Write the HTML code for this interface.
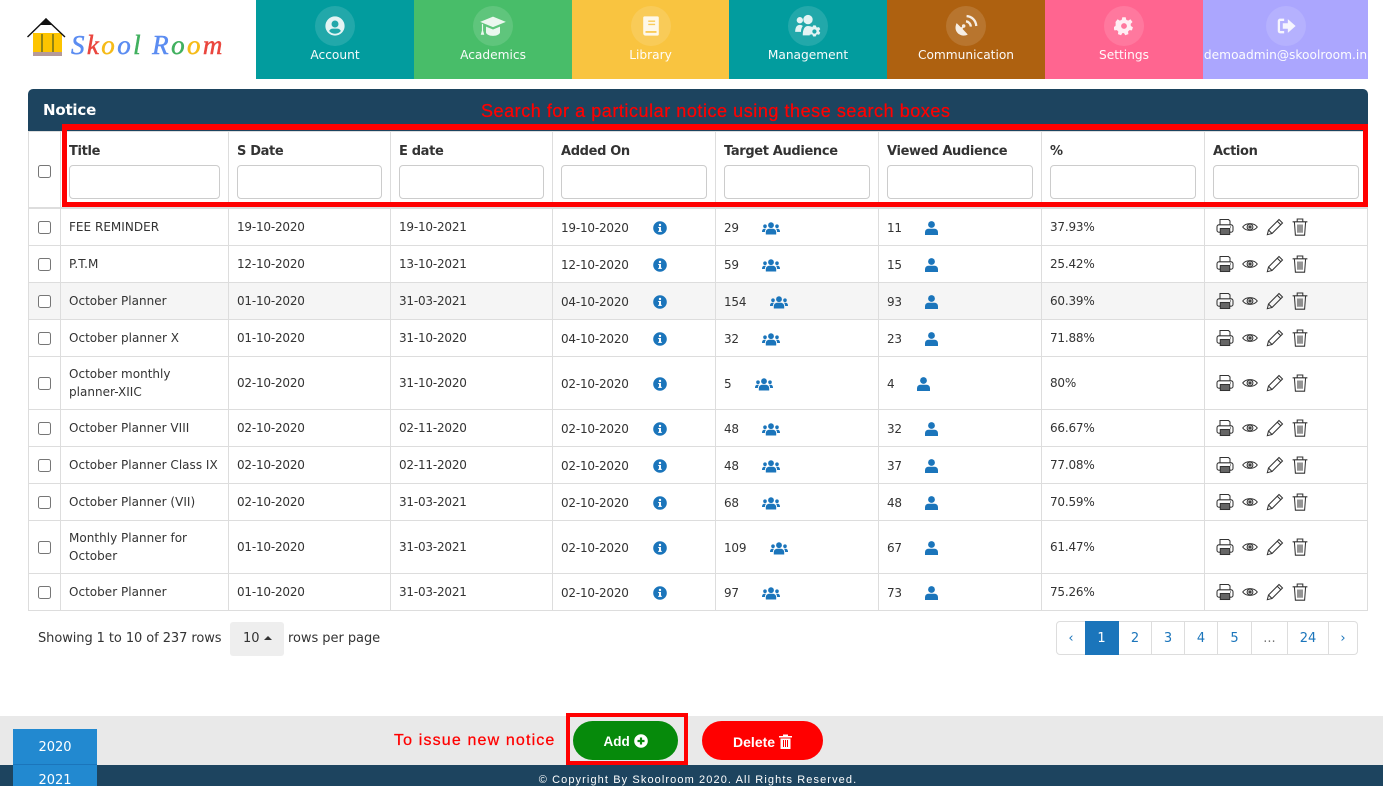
<!DOCTYPE html>
<html><head><meta charset="utf-8"><title>Notice</title>
<style>
html,body{margin:0;padding:0;background:#fff}
body{width:1383px;height:786px;overflow:hidden;position:relative;font-family:"DejaVu Sans","Liberation Sans",sans-serif;font-size:12px;color:#333}
.tile{position:absolute;top:0;height:79px;color:#fff;text-align:center}
.tile .c{position:absolute;left:50%;margin-left:-20px;top:6px;width:40px;height:40px;border-radius:50%;background:rgba(255,255,255,.13)}
.tile svg{position:absolute;left:9px;top:9px;width:22px;height:22px;fill:#fff;opacity:.88}
.tile .l{position:absolute;left:0;right:0;top:48px;font-size:12.2px;line-height:15px;white-space:nowrap;opacity:.97}
.abs{position:absolute}
table{position:absolute;left:28px;top:131px;width:1339px;border-collapse:collapse;table-layout:fixed}
td,th{border:1px solid #ddd;padding:0 8px;font-weight:normal;text-align:left;vertical-align:middle;line-height:18px;overflow:hidden;white-space:nowrap}
td.w{white-space:normal}
td:nth-child(2){letter-spacing:.02px}
td:nth-child(3),td:nth-child(4),.n,td:nth-child(8){letter-spacing:-.2px}
.n,.ic,.nf{position:relative;top:1px}
th{height:75px;border-bottom:2px solid #ddd;padding:0 8px;vertical-align:top}
th b{display:block;margin-top:11px;font-size:13px;line-height:18px;color:#333;letter-spacing:-.35px}
th i{display:block;box-sizing:border-box;height:34px;margin-top:4px;width:146px;background:#fff;border:1px solid #ccc;border-radius:4px}
tr.a td{height:36px}tr.b td{height:52px}tr.g td{background:#f5f5f5}
.cb{display:block;box-sizing:border-box;width:13px;height:13px;border:1px solid #767676;border-radius:2.5px;background:#fff;margin:0 auto}
.n{display:inline-block;vertical-align:middle}
td svg{vertical-align:middle}
.ic{fill:#1b75bb}
.act{display:flex;align-items:center;height:18px;margin-left:3px}
.act svg{fill:none;stroke:#333;stroke-width:1.05;display:block}
.pg{position:absolute;top:621px;height:32px;box-sizing:content-box;border:1px solid #ddd;border-left:0;text-align:center;line-height:34px;font-size:13px;color:#1b75bb}
.red{font-family:"Liberation Sans",sans-serif;color:#f00;white-space:nowrap;-webkit-text-stroke:.25px #f00}
.btn{position:absolute;top:721px;height:39px;border-radius:20px;color:#fff;font-weight:bold;font-size:13.5px;text-align:center;line-height:41px;font-family:"Liberation Sans",sans-serif}
</style></head><body>
<svg width="0" height="0" style="position:absolute"><defs>
<symbol id="pr" viewBox="0 0 18 18"><path d="M4 7V1.500h8.500L14 3v4"/><rect x="1" y="6.800" width="16" height="7.400" rx="2"/><rect x="4.300" y="10.500" width="9.400" height="6" fill="#666"/><path d="M14 9h1"/></symbol>
<symbol id="ey" viewBox="0 0 16 10"><path d="M.7 5C4 .5 12 .5 15.300 5 12 9.500 4 9.500.7 5Z"/><circle cx="8" cy="5" r="2.900"/><circle cx="8" cy="5" r="1.100" fill="#666"/></symbol>
<symbol id="pe" viewBox="0 0 18 18"><path d="M1.300 16.700 2.500 12 13 1.500 16.500 5 6 15.500ZM11.300 3.200l3.500 3.500M2.500 12 6 15.500"/></symbol>
<symbol id="tr" viewBox="0 0 16 18"><path d="M.6 3.800h14.800M5.200 3.600V1h5.600v2.600M2.400 4l1 13.200h9.200l1-13.200M6 6.500v8.300M8 6.500v8.300M10 6.500v8.300"/></symbol>
<symbol id="in" viewBox="0 0 14 14"><circle cx="7" cy="7" r="6.800" fill="#1b75bb"/><rect x="6" y="6" width="2" height="4.600" fill="#fff"/><rect x="5.200" y="9.800" width="3.600" height="1.100" fill="#fff"/><rect x="5.200" y="6" width="2" height="1" fill="#fff"/><circle cx="7" cy="4" r="1.200" fill="#fff"/></symbol>
<symbol id="us" viewBox="0 0 18 13"><circle cx="9" cy="3.200" r="2.900"/><circle cx="3" cy="4.200" r="1.800"/><circle cx="15" cy="4.200" r="1.800"/><path d="M3.800 12.500v-2.300C3.800 8 5.500 6.800 7.500 6.800h3c2 0 3.700 1.200 3.700 3.400v2.300ZM0 9.800C0 7.800 1 6.800 2.400 6.800h1.700C3.200 7.700 2.900 8.800 2.900 10H0ZM18 9.800c0-2-1-3-2.400-3h-1.700c.9.900 1.200 2 1.200 3.200H18Z"/></symbol>
<symbol id="u1" viewBox="0 0 13 14"><circle cx="6.500" cy="3.500" r="3.400"/><path d="M0 14v-2.500C0 9 1.800 7.800 3.500 7.800h6C11.200 7.800 13 9 13 11.500V14Z"/></symbol>
</defs></svg>

<!-- logo -->
<svg class="abs" style="left:26px;top:16px" width="44" height="42" viewBox="0 0 44 42"><rect x="7" y="17" width="29" height="19" fill="#fdc400"/><rect x="7" y="36" width="29" height="4" fill="#b59a9a"/><path d="M16 18v18M27 18v18" stroke="#4a5a20" stroke-width="1.200"/><path d="M1.500 21 20 3l19 18" fill="none" stroke="#111" stroke-width="1.400"/><path d="M14 9 20 2l6 7Z" fill="#111"/></svg>
<div class="abs" style="left:71px;top:30px;font:italic 27px/30px 'Liberation Serif',serif;letter-spacing:2.400px;white-space:nowrap;opacity:.9;-webkit-text-stroke:.5px currentColor"><span style="color:#4a80f0">S</span><span style="color:#e8332a">k</span><span style="color:#f5b400">o</span><span style="color:#4a80f0">o</span><span style="color:#2da84e">l</span> <span style="color:#4a80f0">R</span><span style="color:#2da84e">o</span><span style="color:#f5b400">o</span><span style="color:#e8332a">m</span></div>

<!-- nav -->
<div class="tile" style="left:256px;width:158px;background:#029c9e"><div class="c"><svg viewBox="0 0 24 24"><path fill-rule="evenodd" d="M12 1.500a10.500 10.500 0 1 0 0 21 10.500 10.500 0 0 0 0-21Zm0 4.500a3.800 3.800 0 1 1 0 7.600 3.800 3.800 0 0 1 0-7.600Zm0 14.500c-2.600 0-4.900-1.200-6.400-3 .7-1.600 2.200-2.600 3.900-2.600h5c1.700 0 3.200 1 3.900 2.600-1.500 1.800-3.800 3-6.400 3Z"/></svg></div><div class="l">Account</div></div>
<div class="tile" style="left:414px;width:158px;background:#48bd69"><div class="c"><svg viewBox="0 0 24 24" style="left:6px;top:6px;width:28px;height:28px"><path d="M12 4 1 8.500l11 4.500 11-4.500ZM6 12.500v5c0 1.500 2.700 3 6 3s6-1.500 6-3v-5l-6 2.500ZM2.500 10v6l-1 3.500h3l-1-3.500v-5.500Z"/></svg></div><div class="l">Academics</div></div>
<div class="tile" style="left:572px;width:157px;background:#f9c440"><div class="c"><svg viewBox="0 0 24 24"><path fill-rule="evenodd" d="M5 1.500h14a1.500 1.500 0 0 1 1.500 1.500v18a1.500 1.500 0 0 1-1.500 1.500H6a2.500 2.500 0 0 1-2.500-2.500V3A1.500 1.500 0 0 1 5 1.500ZM9 6v1.500h7.500V6Zm0 3.500V11h7.500V9.500ZM6 17.500v2h12v-2Z"/></svg></div><div class="l">Library</div></div>
<div class="tile" style="left:729px;width:158px;background:#029c9e"><div class="c"><svg viewBox="0 0 24 24" style="left:6px;top:6px;width:28px;height:28px"><circle cx="5" cy="7" r="2.700"/><circle cx="12" cy="6.500" r="4"/><path d="M1 17c0-4 1.500-6 4-6 1 0 2 .3 2.500 1-1 1.500-1.500 3-1.500 5ZM7.500 20c0-5 1.500-8 4.500-8 1.500 0 3 .4 4 1.200-1.500 1.500-2.500 3-2.500 6.800Z"/><path fill-rule="evenodd" d="M18.500 11.500l1 1.800 2-.3 1 1.700-1.300 1.500 1.300 1.600-1 1.700-2-.4-1 1.900h-2l-1-1.900-2 .4-1-1.700 1.300-1.600-1.300-1.500 1-1.700 2 .3 1-1.800Zm-1 3.400a1.800 1.800 0 1 0 0 3.600 1.800 1.800 0 0 0 0-3.600Z"/></svg></div><div class="l">Management</div></div>
<div class="tile" style="left:887px;width:158px;background:#ae6110"><div class="c"><svg viewBox="0 0 24 24" style="left:6px;top:6px;width:28px;height:28px"><path d="M4 9.500c-2 4-.8 7.500 2 9.500 2.500 1.800 5.500 1.500 7.500.3L9 14.500l1-1.200-1-1-1.200 1Z"/><path fill="none" stroke="#fff" stroke-width="2" d="M12 8c2.300.3 4 2.200 4.200 4.500M12.500 3.500c4.500.3 8 3.800 8.300 8.500"/><circle cx="10" cy="12" r="1.500"/></svg></div><div class="l">Communication</div></div>
<div class="tile" style="left:1045px;width:158px;background:#ff6590"><div class="c"><svg viewBox="0 0 24 24" style="left:10px;top:10px;width:20px;height:20px"><path fill-rule="evenodd" d="M10 1.500h4l.7 3 2.300 1 2.700-1.600 2.500 3.300-2.200 2.200.2 2.600 2.500 1.500-1.200 3.800-3-.4-1.700 1.900.5 3-3.800 1.300-1.500-2.600h-2l-1.500 2.600-3.800-1.300.5-3-1.700-1.900-3 .4-1.200-3.800 2.500-1.500.2-2.600L1.800 7.200l2.500-3.300L7 5.500l2.300-1ZM12 8.500a3.500 3.500 0 1 0 0 7 3.500 3.500 0 0 0 0-7Z"/></svg></div><div class="l">Settings</div></div>
<div class="tile" style="left:1203px;width:165px;background:#aba6fe"><div class="c"><svg viewBox="0 0 24 24"><path d="M3 6.500A2.500 2.500 0 0 1 5.500 4H10v2.500H6a.5.500 0 0 0-.5.500v10a.5.500 0 0 0 .5.500h4V20H5.500A2.500 2.500 0 0 1 3 17.500ZM14 4.500 22.500 12 14 19.500V15H8.500V9H14Z"/></svg></div><div class="l" style="font-size:12.2px;letter-spacing:.02px">demoadmin@skoolroom.in</div></div>

<!-- panel header -->
<div class="abs" style="left:28px;top:89px;width:1340px;height:42px;background:#1d445f;border-radius:5px 5px 0 0"></div>
<div class="abs" style="left:43px;top:100px;color:#fff;font-weight:bold;font-size:15px;line-height:20px;letter-spacing:-.2px">Notice</div>

<table>
<colgroup><col style="width:32px"><col style="width:168px"><col style="width:162px"><col style="width:162px"><col style="width:163px"><col style="width:163px"><col style="width:163px"><col style="width:163px"><col style="width:163px"></colgroup>
<tr><th style="vertical-align:middle;padding:0"><span class="cb" style="margin-top:3px"></span></th><th><b>Title</b><i style="width:151px"></i></th><th><b>S Date</b><i style="width:145px"></i></th><th><b>E date</b><i style="width:145px"></i></th><th><b>Added On</b><i></i></th><th><b>Target Audience</b><i></i></th><th><b>Viewed Audience</b><i></i></th><th><b>%</b><i></i></th><th><b>Action</b><i></i></th></tr>
<tr class="a"><td style="padding:0"><span class="cb"></span></td><td>FEE REMINDER</td><td>19-10-2020</td><td>19-10-2021</td><td><span class="n" style="width:92px">19-10-2020</span><svg class="nf" width="14" height="14"><use href="#in"/></svg></td><td><span class="n" style="width:38px">29</span><svg class="ic" width="18" height="13"><use href="#us"/></svg></td><td><span class="n" style="width:38px">11</span><svg class="ic" width="13" height="14"><use href="#u1"/></svg></td><td>37.93%</td><td><div class="act"><svg width="18" height="18"><use href="#pr"/></svg><svg width="16" height="10" style="margin-left:8px"><use href="#ey"/></svg><svg width="18" height="18" style="margin-left:8px"><use href="#pe"/></svg><svg width="16" height="18" style="margin-left:8px"><use href="#tr"/></svg></div></td></tr>
<tr class="a"><td style="padding:0"><span class="cb"></span></td><td>P.T.M</td><td>12-10-2020</td><td>13-10-2021</td><td><span class="n" style="width:92px">12-10-2020</span><svg class="nf" width="14" height="14"><use href="#in"/></svg></td><td><span class="n" style="width:38px">59</span><svg class="ic" width="18" height="13"><use href="#us"/></svg></td><td><span class="n" style="width:38px">15</span><svg class="ic" width="13" height="14"><use href="#u1"/></svg></td><td>25.42%</td><td><div class="act"><svg width="18" height="18"><use href="#pr"/></svg><svg width="16" height="10" style="margin-left:8px"><use href="#ey"/></svg><svg width="18" height="18" style="margin-left:8px"><use href="#pe"/></svg><svg width="16" height="18" style="margin-left:8px"><use href="#tr"/></svg></div></td></tr>
<tr class="a g"><td style="padding:0"><span class="cb"></span></td><td>October Planner</td><td>01-10-2020</td><td>31-03-2021</td><td><span class="n" style="width:92px">04-10-2020</span><svg class="nf" width="14" height="14"><use href="#in"/></svg></td><td><span class="n" style="width:46px">154</span><svg class="ic" width="18" height="13"><use href="#us"/></svg></td><td><span class="n" style="width:38px">93</span><svg class="ic" width="13" height="14"><use href="#u1"/></svg></td><td>60.39%</td><td><div class="act"><svg width="18" height="18"><use href="#pr"/></svg><svg width="16" height="10" style="margin-left:8px"><use href="#ey"/></svg><svg width="18" height="18" style="margin-left:8px"><use href="#pe"/></svg><svg width="16" height="18" style="margin-left:8px"><use href="#tr"/></svg></div></td></tr>
<tr class="a"><td style="padding:0"><span class="cb"></span></td><td>October planner X</td><td>01-10-2020</td><td>31-10-2020</td><td><span class="n" style="width:92px">04-10-2020</span><svg class="nf" width="14" height="14"><use href="#in"/></svg></td><td><span class="n" style="width:38px">32</span><svg class="ic" width="18" height="13"><use href="#us"/></svg></td><td><span class="n" style="width:38px">23</span><svg class="ic" width="13" height="14"><use href="#u1"/></svg></td><td>71.88%</td><td><div class="act"><svg width="18" height="18"><use href="#pr"/></svg><svg width="16" height="10" style="margin-left:8px"><use href="#ey"/></svg><svg width="18" height="18" style="margin-left:8px"><use href="#pe"/></svg><svg width="16" height="18" style="margin-left:8px"><use href="#tr"/></svg></div></td></tr>
<tr class="b"><td style="padding:0"><span class="cb"></span></td><td class="w">October monthly planner-XIIC</td><td>02-10-2020</td><td>31-10-2020</td><td><span class="n" style="width:92px">02-10-2020</span><svg class="nf" width="14" height="14"><use href="#in"/></svg></td><td><span class="n" style="width:31px">5</span><svg class="ic" width="18" height="13"><use href="#us"/></svg></td><td><span class="n" style="width:30px">4</span><svg class="ic" width="13" height="14"><use href="#u1"/></svg></td><td>80%</td><td><div class="act"><svg width="18" height="18"><use href="#pr"/></svg><svg width="16" height="10" style="margin-left:8px"><use href="#ey"/></svg><svg width="18" height="18" style="margin-left:8px"><use href="#pe"/></svg><svg width="16" height="18" style="margin-left:8px"><use href="#tr"/></svg></div></td></tr>
<tr class="a"><td style="padding:0"><span class="cb"></span></td><td>October Planner VIII</td><td>02-10-2020</td><td>02-11-2020</td><td><span class="n" style="width:92px">02-10-2020</span><svg class="nf" width="14" height="14"><use href="#in"/></svg></td><td><span class="n" style="width:38px">48</span><svg class="ic" width="18" height="13"><use href="#us"/></svg></td><td><span class="n" style="width:38px">32</span><svg class="ic" width="13" height="14"><use href="#u1"/></svg></td><td>66.67%</td><td><div class="act"><svg width="18" height="18"><use href="#pr"/></svg><svg width="16" height="10" style="margin-left:8px"><use href="#ey"/></svg><svg width="18" height="18" style="margin-left:8px"><use href="#pe"/></svg><svg width="16" height="18" style="margin-left:8px"><use href="#tr"/></svg></div></td></tr>
<tr class="a"><td style="padding:0"><span class="cb"></span></td><td>October Planner Class IX</td><td>02-10-2020</td><td>02-11-2020</td><td><span class="n" style="width:92px">02-10-2020</span><svg class="nf" width="14" height="14"><use href="#in"/></svg></td><td><span class="n" style="width:38px">48</span><svg class="ic" width="18" height="13"><use href="#us"/></svg></td><td><span class="n" style="width:38px">37</span><svg class="ic" width="13" height="14"><use href="#u1"/></svg></td><td>77.08%</td><td><div class="act"><svg width="18" height="18"><use href="#pr"/></svg><svg width="16" height="10" style="margin-left:8px"><use href="#ey"/></svg><svg width="18" height="18" style="margin-left:8px"><use href="#pe"/></svg><svg width="16" height="18" style="margin-left:8px"><use href="#tr"/></svg></div></td></tr>
<tr class="a"><td style="padding:0"><span class="cb"></span></td><td>October Planner (VII)</td><td>02-10-2020</td><td>31-03-2021</td><td><span class="n" style="width:92px">02-10-2020</span><svg class="nf" width="14" height="14"><use href="#in"/></svg></td><td><span class="n" style="width:38px">68</span><svg class="ic" width="18" height="13"><use href="#us"/></svg></td><td><span class="n" style="width:38px">48</span><svg class="ic" width="13" height="14"><use href="#u1"/></svg></td><td>70.59%</td><td><div class="act"><svg width="18" height="18"><use href="#pr"/></svg><svg width="16" height="10" style="margin-left:8px"><use href="#ey"/></svg><svg width="18" height="18" style="margin-left:8px"><use href="#pe"/></svg><svg width="16" height="18" style="margin-left:8px"><use href="#tr"/></svg></div></td></tr>
<tr class="b"><td style="padding:0"><span class="cb"></span></td><td class="w">Monthly Planner for October</td><td>01-10-2020</td><td>31-03-2021</td><td><span class="n" style="width:92px">02-10-2020</span><svg class="nf" width="14" height="14"><use href="#in"/></svg></td><td><span class="n" style="width:46px">109</span><svg class="ic" width="18" height="13"><use href="#us"/></svg></td><td><span class="n" style="width:38px">67</span><svg class="ic" width="13" height="14"><use href="#u1"/></svg></td><td>61.47%</td><td><div class="act"><svg width="18" height="18"><use href="#pr"/></svg><svg width="16" height="10" style="margin-left:8px"><use href="#ey"/></svg><svg width="18" height="18" style="margin-left:8px"><use href="#pe"/></svg><svg width="16" height="18" style="margin-left:8px"><use href="#tr"/></svg></div></td></tr>
<tr class="a"><td style="padding:0"><span class="cb"></span></td><td>October Planner</td><td>01-10-2020</td><td>31-03-2021</td><td><span class="n" style="width:92px">02-10-2020</span><svg class="nf" width="14" height="14"><use href="#in"/></svg></td><td><span class="n" style="width:38px">97</span><svg class="ic" width="18" height="13"><use href="#us"/></svg></td><td><span class="n" style="width:38px">73</span><svg class="ic" width="13" height="14"><use href="#u1"/></svg></td><td>75.26%</td><td><div class="act"><svg width="18" height="18"><use href="#pr"/></svg><svg width="16" height="10" style="margin-left:8px"><use href="#ey"/></svg><svg width="18" height="18" style="margin-left:8px"><use href="#pe"/></svg><svg width="16" height="18" style="margin-left:8px"><use href="#tr"/></svg></div></td></tr>
</table>

<!-- annotation -->
<div class="abs" style="left:62px;top:124px;width:1306px;height:83px;box-sizing:border-box;border:5px solid #f00;border-top-width:6px"></div>
<div class="abs red" style="left:481px;top:100px;font-size:18px;line-height:22px;letter-spacing:.55px">Search for a particular notice using these search boxes</div>

<!-- pagination row -->
<div class="abs" style="left:38px;top:630px;font-size:13px;line-height:18px;white-space:nowrap;letter-spacing:-.08px">Showing 1 to 10 of 237 rows</div>
<div class="abs" style="left:230px;top:622px;width:54px;height:34px;background:#eee;border-radius:3px;font-size:13px;line-height:34px"><span style="margin-left:13px">10</span><span style="display:inline-block;margin-left:4px;vertical-align:2px;border:4px solid transparent;border-top:0;border-bottom:4px solid #333"></span></div>
<div class="abs" style="left:288px;top:630px;font-size:13px;line-height:18px;white-space:nowrap;letter-spacing:-.05px">rows per page</div>
<div class="pg" style="left:1056px;width:28px;border-left:1px solid #ddd;border-radius:4px 0 0 4px">‹</div>
<div class="pg" style="left:1085px;width:33px;background:#1b75bb;border-color:#1b75bb;color:#fff">1</div>
<div class="pg" style="left:1119px;width:32px">2</div>
<div class="pg" style="left:1152px;width:32px">3</div>
<div class="pg" style="left:1185px;width:32px">4</div>
<div class="pg" style="left:1218px;width:33px">5</div>
<div class="pg" style="left:1252px;width:35px;color:#777">...</div>
<div class="pg" style="left:1288px;width:40px">24</div>
<div class="pg" style="left:1329px;width:28px;border-radius:0 4px 4px 0">›</div>

<!-- footer -->
<div class="abs" style="left:0;top:716px;width:1383px;height:49px;background:#e9e9e9"></div>
<div class="abs" style="left:0;top:765px;width:1383px;height:21px;background:#1d445f"></div>
<div class="abs" style="left:13px;top:729px;width:84px;height:36px;background:#2289d0;color:#fff;text-align:center;font-size:13px;line-height:37px">2020</div>
<div class="abs" style="left:13px;top:764px;width:84px;height:22px;background:#2289d0;border-top:1px solid #1b75bb;box-sizing:border-box;color:#fff;text-align:center;font-size:13px;line-height:31px;overflow:hidden">2021</div>
<div class="abs red" style="left:394px;top:731px;font-size:16px;line-height:20px;letter-spacing:1.150px">To issue new notice</div>
<div class="abs" style="left:566px;top:713px;width:122px;height:52px;box-sizing:border-box;border:4px solid #f00"></div>
<div class="btn" style="left:573px;width:105px;background:#068a0b">Add <svg width="14" height="14" viewBox="0 0 14 14" style="vertical-align:-2px"><circle cx="7" cy="7" r="6.800" fill="#fff"/><path d="M3.500 7h7M7 3.500v7" stroke="#068a0b" stroke-width="2.200"/></svg></div>
<div class="btn" style="left:702px;width:121px;background:#f00;font-size:14px;line-height:42px">Delete <svg width="13" height="15" viewBox="0 0 13 15" style="vertical-align:-2px"><path fill="#fff" d="M0 2h13v1.500H0ZM4 .5h5V2H4ZM1.500 4.500h10V15h-10Z"/><path stroke="#f00" d="M4.500 6v7M6.500 6v7M8.500 6v7"/></svg></div>
<div class="abs" style="left:0;top:773px;width:1396px;text-align:center;color:#fff;font-family:'Liberation Sans',sans-serif;font-size:11px;line-height:14px;letter-spacing:1.100px;white-space:nowrap">© Copyright By Skoolroom 2020. All Rights Reserved.</div>
</body></html>
